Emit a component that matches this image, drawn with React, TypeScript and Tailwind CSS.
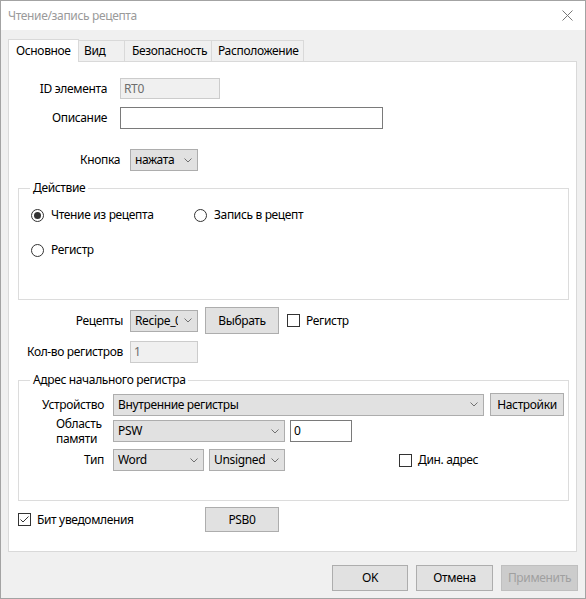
import React from "react";

const Chevron = () => (
  <svg width="8" height="5" viewBox="0 0 8 5" className="shrink-0 ml-[6px]">
    <path d="M0.5 0.5 L4 4 L7.5 0.5" fill="none" stroke="#707070" strokeWidth="1" />
  </svg>
);

function Select({ value, w, extra = "" }: { value: string; w: string; extra?: string }) {
  return (
    <div
      className={`${w} ${extra} h-[22px] bg-[#e1e1e1] border border-[#adadad] flex items-center pl-[4px] pr-[5px] overflow-hidden`}
    >
      <span className="flex-1 whitespace-nowrap overflow-hidden">{value}</span>
      <Chevron />
    </div>
  );
}

function Button({ label, w, h = "h-[24px]", disabled = false }: { label: string; w: string; h?: string; disabled?: boolean }) {
  return (
    <div
      className={`${w} ${h} flex items-center justify-center border ${
        disabled ? "bg-[#cccccc] border-[#bfbfbf] text-[#a0a0a0]" : "bg-[#e1e1e1] border-[#adadad] text-black"
      }`}
    >
      {label}
    </div>
  );
}

function Radio({ checked, label }: { checked?: boolean; label: string }) {
  return (
    <div className="flex items-center">
      <div className="w-[13px] h-[13px] rounded-full border border-[#333] bg-white flex items-center justify-center">
        {checked && <div className="w-[7px] h-[7px] rounded-full bg-[#333]" />}
      </div>
      <span className="ml-[7px]">{label}</span>
    </div>
  );
}

function Checkbox({ checked, label }: { checked?: boolean; label: string }) {
  return (
    <div className="flex items-center">
      <div className="w-[13px] h-[13px] border border-[#333] bg-white flex items-center justify-center">
        {checked && (
          <svg width="11" height="11" viewBox="0 0 11 11">
            <path d="M1.5 5.5 L4 8 L9.5 2.5" fill="none" stroke="#333" strokeWidth="1" />
          </svg>
        )}
      </div>
      <span className="ml-[6px]">{label}</span>
    </div>
  );
}

export default function App() {
  return (
    <div
      className="w-[586px] h-[599px] border border-[#a3a3a3] bg-[#f0f0f0] flex flex-col text-[12px] tracking-[-0.35px] text-black overflow-hidden"
      style={{ fontFamily: '"Noto Sans", "Open Sans", sans-serif' }}
    >
      {/* title bar */}
      <div className="h-[29px] bg-white flex items-center pl-[7px] pr-[8px] shrink-0">
        <span className="flex-1 text-[#9a9a9a]">Чтение/запись рецепта</span>
        <svg width="11" height="11" viewBox="0 0 11 11" className="mr-[4px]">
          <path d="M0.5 0.5 L10.5 10.5 M10.5 0.5 L0.5 10.5" stroke="#777" strokeWidth="1" />
        </svg>
      </div>

      {/* tabs */}
      <div className="flex items-end h-[31px] pl-[7px] shrink-0">
        <div className="h-[23px] px-[7px] bg-white border border-[#d9d9d9] border-b-0 flex items-center -mb-px relative z-10 w-[71px]">
          Основное
        </div>
        <div className="h-[21px] px-[5px] border border-l-0 border-[#d9d9d9] border-b-0 flex items-center w-[46px]">Вид</div>
        <div className="h-[21px] px-[7px] border border-l-0 border-[#d9d9d9] border-b-0 flex items-center w-[87px]">Безопасность</div>
        <div className="h-[21px] px-[6px] border border-l-0 border-[#d9d9d9] border-b-0 flex items-center w-[92px]">Расположение</div>
      </div>

      {/* panel */}
      <div className="ml-[7px] w-[569px] h-[491px] bg-white border border-[#d9d9d9] flex flex-col shrink-0">
        <div className="flex items-center mt-[16px]">
          <div className="w-[98px] text-right">ID элемента</div>
          <div className="ml-[13px] w-[100px] h-[21px] bg-[#f0f0f0] border border-[#cccccc] flex items-center pl-[3px] text-[#6d6d6d]">
            RT0
          </div>
        </div>
        <div className="flex items-center mt-[8px]">
          <div className="w-[98px] text-right">Описание</div>
          <div className="ml-[13px] w-[263px] h-[22px] bg-white border border-[#7a7a7a]" />
        </div>
        <div className="flex items-center mt-[20px]">
          <div className="w-[111px] text-right">Кнопка</div>
          <Select value="нажата" w="w-[68px]" extra="ml-[10px]" />
        </div>

        <fieldset className="ml-[9px] mt-[8px] w-[551px] h-[121px] border border-[#dcdcdc]">
          <legend className="ml-[11px] px-[3px]">Действие</legend>
          <div className="flex mt-[9px] pl-[12px]">
            <div className="w-[163px]">
              <Radio checked label="Чтение из рецепта" />
            </div>
            <Radio label="Запись в рецепт" />
          </div>
          <div className="mt-[17px] pl-[12px]">
            <Radio label="Регистр" />
          </div>
        </fieldset>

        <div className="flex items-center mt-[7px]">
          <div className="w-[114px] text-right">Рецепты</div>
          <Select value="Recipe_0" w="w-[68px]" extra="ml-[7px]" />
          <div className="ml-[7px]">
            <Button label="Выбрать" w="w-[74px]" h="h-[27px]" />
          </div>
          <div className="ml-[8px]">
            <Checkbox label="Регистр" />
          </div>
        </div>
        <div className="flex items-center mt-[7px]">
          <div className="w-[114px] text-right">Кол-во регистров</div>
          <div className="ml-[7px] w-[68px] h-[22px] bg-[#f0f0f0] border border-[#cccccc] flex items-center pl-[3px] text-[#6d6d6d]">
            1
          </div>
        </div>

        <fieldset className="ml-[9px] mt-[8px] w-[551px] h-[130px] border border-[#dcdcdc]">
          <legend className="ml-[11px] px-[3px]">Адрес начального регистра</legend>
          <div className="flex items-center mt-[4px]">
            <div className="w-[85px] text-right">Устройство</div>
            <Select value="Внутренние регистры" w="w-[371px]" extra="ml-[9px]" />
            <div className="ml-[6px]">
              <Button label="Настройки" w="w-[74px]" h="h-[23px]" />
            </div>
          </div>
          <div className="flex items-center mt-[4px]">
            <div className="w-[85px] h-[22px] flex flex-col justify-center pl-[37px] leading-[15px]">
              <div>Область</div>
              <div>памяти</div>
            </div>
            <Select value="PSW" w="w-[172px]" extra="ml-[9px]" />
            <div className="ml-[5px] w-[62px] h-[22px] bg-white border border-[#7a7a7a] flex items-center pl-[3px]">0</div>
          </div>
          <div className="flex items-center mt-[7px]">
            <div className="w-[85px] text-right">Тип</div>
            <Select value="Word" w="w-[91px]" extra="ml-[9px]" />
            <Select value="Unsigned" w="w-[76px]" extra="ml-[5px]" />
            <div className="ml-[114px]">
              <Checkbox label="Дин. адрес" />
            </div>
          </div>
        </fieldset>

        <div className="flex items-center mt-[6px] pl-[9px]">
          <div className="w-[187px]">
            <Checkbox checked label="Бит уведомления" />
          </div>
          <Button label="PSB0" w="w-[74px]" h="h-[25px]" />
        </div>
      </div>

      {/* bottom buttons */}
      <div className="flex justify-end gap-[8px] pr-[7px] mt-[13px]">
        <Button label="OK" w="w-[76px]" h="h-[26px]" />
        <Button label="Отмена" w="w-[77px]" h="h-[26px]" />
        <Button label="Применить" w="w-[77px]" h="h-[26px]" disabled />
      </div>
    </div>
  );
}
